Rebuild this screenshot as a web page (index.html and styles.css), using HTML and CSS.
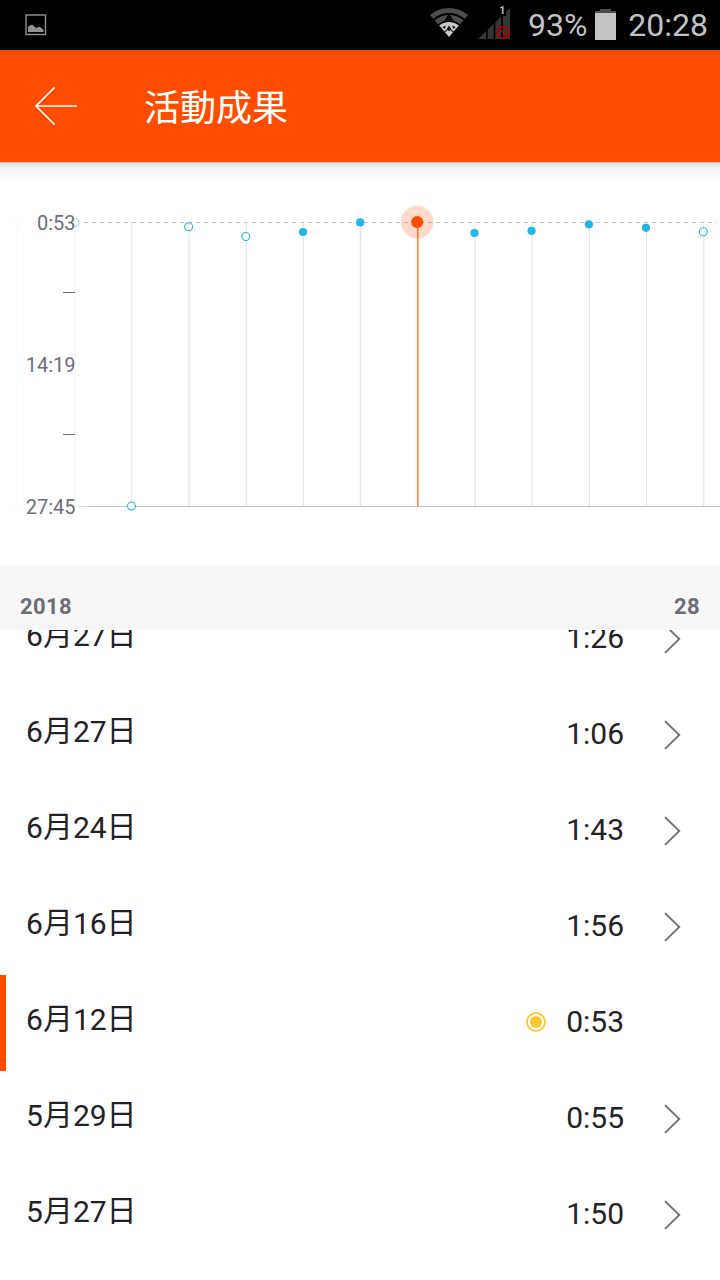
FILE: index.html
```html
<!DOCTYPE html>
<html lang="zh-Hant">
<head>
    <meta charset="UTF-8">
    <meta name="viewport" content="width=device-width, initial-scale=1.0">
    <title>活動成果</title>
    <link rel="stylesheet" href="styles.css">
</head>
<body>

<div class="status-bar">
    <svg class="picture-icon" width="22" height="22" viewBox="0 0 22 22">
        <rect x="1" y="1" width="19.5" height="19.5" fill="none" stroke="#929292" stroke-width="1.4"/>
        <path d="M3 18V13L5 11.5L7 10.5L9.5 12.5L11 14L14 12.8L16 13.5L18.5 16V18Z" fill="#929292"/>
    </svg>
    <div class="status-right">
        <svg class="wifi" width="40" height="32" viewBox="0 0 40 32">
            <path d="M1 10A29 29 0 0 1 39 10L35.700 13.800A24 24 0 0 0 4.300 13.800Z" fill="#4d4d4d"/>
            <path d="M5.600 15.300A22 22 0 0 1 34.400 15.300L31 19.200A17 17 0 0 0 9 19.200Z" fill="#4d4d4d"/>
            <path d="M10.200 20.600A15 15 0 0 1 29.800 20.600L20 32Z" fill="#c9c9c9"/>
            <path d="M20 8.500L15.500 15.500H24.500Z" fill="#000"/>
            <path d="M13.500 22L17 20.500L15.500 24ZM26.500 22L23 20.500L24.500 24ZM20 20.500L22.500 24.500L20 26L17.500 24.500Z" fill="#000"/>
            <path d="M15.500 26.500L18 25.500M24.500 26.500L22 25.500" fill="none" stroke="#000" stroke-width="1.200"/>
        </svg>
        <svg class="signal" width="34" height="36" viewBox="0 0 34 36">
            <path d="M0 34L32 3V34Z" fill="#343434"/>
            <path d="M9 24V34M16.500 15V34M24 9V34" stroke="#000" stroke-width="1.600"/>
            <path d="M20 0H28V11H20Z" fill="#000"/>
            <text x="21.500" y="9" class="sim">1</text>
            <circle cx="25.300" cy="27.500" r="5.800" fill="none" stroke="#a80000" stroke-width="1.800"/>
            <path d="M21.500 23.500L29 31.500" stroke="#a80000" stroke-width="1.800"/>
        </svg>
        <span class="percent">93%</span>
        <svg class="battery" width="21" height="32" viewBox="0 0 21 32">
            <path d="M5 1H16V3H21V5H0V3H5Z" fill="#4d4d4d"/>
            <rect y="5" width="21" height="27" fill="#c3c3c3"/>
        </svg>
        <span class="clock">20:28</span>
    </div>
</div>

<div class="app-bar">
    <svg class="back" width="44" height="40" viewBox="0 0 44 40">
        <path d="M43 20H2M20.500 1.500L2 20L20.500 38.500" fill="none" stroke="#fff" stroke-width="1.700"/>
    </svg>
    <h1>活動成果</h1>
</div>

<div class="chart">
    <svg width="720" height="404" viewBox="0 162 720 404">
        <defs>
            <linearGradient id="axisFade" gradientUnits="userSpaceOnUse" x1="70" y1="0" x2="92" y2="0">
                <stop offset="0" stop-color="#c4c4c4" stop-opacity="0.1"/>
                <stop offset="1" stop-color="#c4c4c4"/>
            </linearGradient>
        </defs>

        <!-- Grid -->
        <g class="grid">
            <path d="M17.500 222V506" opacity="0.100"/>
            <path d="M75 222V506" opacity="0.350"/>
            <path d="M131.700 222V506M189.200 222V506M246.400 222V506M303.500 222V506M360.500 222V506M475 222V506M532 222V506M589.300 222V506M646.500 222V506M703.700 222V506"/>
        </g>
        <path class="best" d="M84 222.500H717"/>
        <path d="M12 506.500H75" stroke="#fafafa"/>
        <rect x="75" y="506" width="645" height="1" fill="url(#axisFade)"/>

        <!-- Axis labels -->
        <g class="labels">
            <text x="75.500" y="230">0:53</text>
            <text x="75.500" y="372">14:19</text>
            <text x="75.500" y="514">27:45</text>
        </g>
        <path d="M63 292.500H75M63 434.500H75" stroke="#6d6d78"/>

        <!-- Results -->
        <g class="open">
            <circle cx="17" cy="222.500" r="4" opacity="0.050"/>
            <path d="M75 218.500A4 4 0 0 1 75 226.500" opacity="0.500"/>
            <circle cx="131.500" cy="506" r="4"/>
            <circle cx="188.600" cy="226.800" r="4"/>
            <circle cx="245.800" cy="236.500" r="4"/>
            <circle cx="703.300" cy="231.800" r="4"/>
        </g>
        <g class="done">
            <circle cx="303" cy="232" r="4.100"/>
            <circle cx="360.200" cy="222.400" r="4.100"/>
            <circle cx="474.500" cy="233" r="4.100"/>
            <circle cx="531.600" cy="230.800" r="4.100"/>
            <circle cx="588.900" cy="224.300" r="4.100"/>
            <circle cx="646" cy="227.800" r="4.100"/>
        </g>
        <path d="M417.800 222V506" stroke="#ff4d00" stroke-opacity="0.750" stroke-width="1.500"/>
        <circle cx="417.200" cy="222" r="16.200" fill="#ff4d00" fill-opacity="0.210"/>
        <circle cx="417.200" cy="222" r="6.100" fill="#ff4d00"/>
    </svg>
</div>

<div class="year">
    <span>2018</span>
    <span>28</span>
</div>

<div class="list">
    <div class="row">
        <span class="date">6<i>月</i>27<i>日</i></span>
        <span class="time">1:26</span>
        <svg class="arrow" viewBox="0 0 18 30"><path d="M1 1.200L15.300 15L1 28.800"/></svg>
    </div>
    <div class="row">
        <span class="date">6<i>月</i>27<i>日</i></span>
        <span class="time">1:06</span>
        <svg class="arrow" viewBox="0 0 18 30"><path d="M1 1.200L15.300 15L1 28.800"/></svg>
    </div>
    <div class="row">
        <span class="date">6<i>月</i>24<i>日</i></span>
        <span class="time">1:43</span>
        <svg class="arrow" viewBox="0 0 18 30"><path d="M1 1.200L15.300 15L1 28.800"/></svg>
    </div>
    <div class="row">
        <span class="date">6<i>月</i>16<i>日</i></span>
        <span class="time">1:56</span>
        <svg class="arrow" viewBox="0 0 18 30"><path d="M1 1.200L15.300 15L1 28.800"/></svg>
    </div>
    <div class="row selected">
        <span class="date">6<i>月</i>12<i>日</i></span>
        <svg class="medal" width="20" height="20" viewBox="0 0 20 20">
            <circle cx="10" cy="10" r="9" fill="none" stroke="#ffc933" stroke-width="1.800"/>
            <circle cx="10" cy="10" r="6.100" fill="#ffc933"/>
        </svg>
        <span class="time">0:53</span>
    </div>
    <div class="row">
        <span class="date">5<i>月</i>29<i>日</i></span>
        <span class="time">0:55</span>
        <svg class="arrow" viewBox="0 0 18 30"><path d="M1 1.200L15.300 15L1 28.800"/></svg>
    </div>
    <div class="row">
        <span class="date">5<i>月</i>27<i>日</i></span>
        <span class="time">1:50</span>
        <svg class="arrow" viewBox="0 0 18 30"><path d="M1 1.200L15.300 15L1 28.800"/></svg>
    </div>
</div>

</body>
</html>
```
FILE: styles.css
```css
* {
    box-sizing: border-box;
}
body {
    margin: 0;
    height: 1280px;
    display: flex;
    flex-direction: column;
    overflow: hidden;
    background-color: #fff;
    color: #222226;
    font-family: Roboto, "Noto Sans CJK TC", sans-serif;
}
svg {
    display: block;
    flex: none;
}
.status-bar {
    height: 50px;
    flex: none;
    display: flex;
    justify-content: space-between;
    padding: 0 12px 0 25px;
    background-color: #000;
    color: #c3c3c3;
    font-size: 32px;
    line-height: 50px;
}
.picture-icon {
    margin-top: 14px;
}
.status-right {
    display: flex;
}
.wifi {
    margin-top: 5px;
}
.signal {
    margin: 5px 0 0 9px;
}
.sim {
    font-size: 10px;
    font-weight: bold;
    fill: #c3c3c3;
}
.percent {
    margin-left: 16px;
}
.battery {
    margin: 8px 12px 0 8px;
}
.app-bar {
    height: 112px;
    flex: none;
    display: flex;
    align-items: center;
    padding-left: 34px;
    background: linear-gradient(#f04b05, #ff4d00 12px);
    border-bottom: 1px solid #f04a04;
    color: #fff;
}
.app-bar h1 {
    margin: 0 0 0 66px;
    padding-top: 7px;
    font-size: 36px;
    font-weight: 400;
    line-height: 54px;
}
.chart {
    height: 404px;
    flex: none;
    background: linear-gradient(#b8b8b8, #e6e6e6 2px, #f6f6f6 7px, #fff 20px);
}
.grid {
    fill: none;
    stroke: #e6e6e6;
    stroke-width: 1.3;
}
.best {
    stroke: #c4c4c4;
    stroke-dasharray: 4 4;
}
.labels {
    font-size: 20px;
    fill: #6d6d78;
    text-anchor: end;
}
.open {
    fill: #fff;
    stroke: #22b5ea;
    stroke-width: 1.1;
}
.done {
    fill: #22b5ea;
}
.year {
    height: 64px;
    flex: none;
    display: flex;
    justify-content: space-between;
    padding: 17px 20px 0;
    background-color: #f7f7f7;
    color: #6d6d78;
    font-size: 22px;
    font-weight: bold;
    letter-spacing: 0.4px;
    line-height: 47px;
}
.list {
    flex: 1;
    display: flex;
    flex-direction: column;
    justify-content: flex-end;
    overflow: hidden;
    padding-bottom: 17px;
}
.row {
    height: 96px;
    flex: none;
    display: flex;
    align-items: center;
    padding: 0 38px 0 26px;
    font-size: 30px;
    line-height: 40px;
}
.date {
    flex: 1;
    height: 40px;
    margin-bottom: 6px;
}
.date i {
    font-style: normal;
    line-height: 30px;
    vertical-align: 1px;
}
.time {
    padding-bottom: 3px;
}
.arrow {
    width: 18px;
    height: 30px;
    margin-left: 40px;
    fill: none;
    stroke: #6d6d78;
    stroke-width: 1.8;
}
.selected {
    border-left: 6px solid #ff4d00;
    padding: 0 96px 0 20px;
}
.medal {
    margin: 0 20px 2px 0;
}
```
